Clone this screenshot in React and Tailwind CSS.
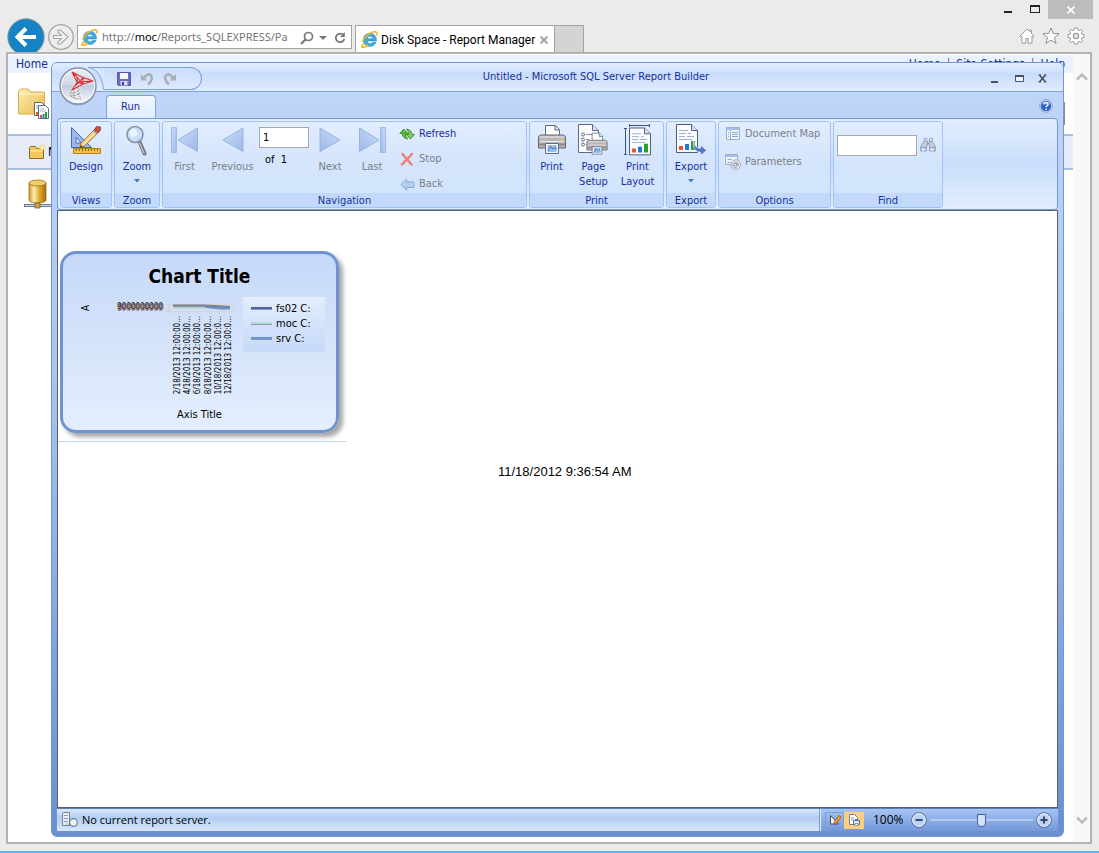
import React from "react";

const TAHOMA = "font-['DejaVu_Sans_Condensed','DejaVu_Sans',sans-serif]";
const SEGOE = "font-['Open_Sans','Noto_Sans',sans-serif]";

/* ---------- browser icons ---------- */

function IeLogo({ className }) {
  return (
    <svg viewBox="0 0 16 16" className={className} aria-hidden="true">
      <path
        d="M14.6 9.3H5.8c.2 1.6 1.3 2.4 2.7 2.4 1.1 0 1.9-.4 2.4-1.2h3.3c-.8 2.5-3 4-5.8 4-3.600 0-6.200-2.400-6.200-6 0-3.700 2.600-6.300 6.200-6.300 3.900 0 6.300 2.800 6.200 7.100zM5.900 7.200h5.100C10.800 5.800 9.900 5 8.500 5 7.100 5 6.200 5.800 5.900 7.200z"
        fill="#3fa9e0"
        stroke="#2a86c4"
        strokeWidth=".5"
      />
      <path
        d="M2.400 12.200C.6 14.200.400 15.500 1.500 15.600c1.200 0 3-1 4.700-2.200M1.800 9.500C3 5.900 7.600 2 11.400.9c2.600-.7 4 .2 3.500 2.600"
        fill="none"
        stroke="#f3b51f"
        strokeWidth="1.500"
        strokeLinecap="round"
      />
    </svg>
  );
}

function BackArrow() {
  return (
    <svg viewBox="0 0 38 38" className="h-[38px] w-[38px]" aria-hidden="true">
      <circle cx="19" cy="19" r="18.200" fill="#1684c4" stroke="#8b9399" strokeWidth="1" />
      <path d="M29 19H11M19 10.500 10.500 19l8.500 8.500" fill="none" stroke="#fff" strokeWidth="4" />
    </svg>
  );
}

function ForwardArrow() {
  return (
    <svg viewBox="0 0 26 26" className="h-[26px] w-[26px]" aria-hidden="true">
      <circle cx="13" cy="13" r="12.300" fill="#ededed" stroke="#a6a6a6" strokeWidth="1.300" />
      <path
        d="M5.500 11.500h8L10 8V6h2.500L20 13l-7.500 7H10v-2l3.500-3.500h-8z"
        fill="#f4f4f4"
        stroke="#a6a6a6"
        strokeWidth="1.100"
      />
    </svg>
  );
}

function HomeIcon() {
  return (
    <svg viewBox="0 0 16 16" className="h-4 w-4" aria-hidden="true">
      <path
        d="M8 1 .8 8.200l1 1L3 8.300v6.900h3.800v-4.700h2.400v4.700H13V8.300l1.200.9 1-1-2.700-2.700V2h-1.700v1.800z"
        fill="#fff"
        stroke="#9a9a9a"
        strokeLinejoin="round"
      />
    </svg>
  );
}

function StarIcon() {
  return (
    <svg viewBox="0 0 18 18" className="h-[18px] w-[18px]" aria-hidden="true">
      <path
        d="m9 1 2.200 5.500 5.900.3-4.600 3.700 1.600 5.900L9 13.200l-5.100 3.200 1.600-5.900L.9 6.800l5.900-.3z"
        fill="#fff"
        stroke="#8f8f8f"
        strokeLinejoin="round"
      />
    </svg>
  );
}

function GearIcon() {
  return (
    <svg viewBox="0 0 18 18" className="h-[18px] w-[18px]" aria-hidden="true">
      <path
        d="M7.500 1h3l.4 2 1.300.6L14 2.500 15.600 4.200l-1.200 1.700.6 1.300 2 .4v2.800l-2 .4-.6 1.300 1.200 1.700-1.600 1.700-1.800-1.100-1.300.6-.4 2h-3l-.4-2-1.300-.6L4 15.500l-1.600-1.700 1.200-1.700L3 10.800l-2-.4V7.600l2-.4.6-1.300L2.400 4.200 4 2.500l1.800 1.100L7.100 3z"
        fill="#fff"
        stroke="#9a9a9a"
        strokeLinejoin="round"
      />
      <circle cx="9" cy="9" r="2.600" fill="#ebebeb" stroke="#9a9a9a" strokeWidth="1.200" />
    </svg>
  );
}

/* ---------- page icons behind the window ---------- */

function MiniChart({ x, y }) {
  return (
    <g transform={`translate(${x} ${y})`}>
      <path d="M.5.5h7l3 3v10H.5z" fill="#fff" stroke="#5c6b85" />
      <path d="M2 4h4M2 6h6" stroke="#a9b6cc" />
      <path d="M2 10h2v3H2z" fill="#f0522a" />
      <path d="M4.500 9h2v4h-2z" fill="#1f7ad8" />
      <path d="M7 7h2v6H7z" fill="#1fa31f" />
    </g>
  );
}

function FolderReports() {
  return (
    <svg viewBox="0 0 32 32" className="h-8 w-8" aria-hidden="true">
      <defs>
        <linearGradient id="folderFill" x1="0" y1="0" x2="1" y2="1">
          <stop offset="0" stopColor="#fdf0b4" />
          <stop offset="1" stopColor="#e7b84b" />
        </linearGradient>
      </defs>
      <path d="M.5 26V3l2-2h8l2 3h14v22z" fill="url(#folderFill)" stroke="#d8ae55" />
      <path d="M1 6h25" stroke="#fff6cf" />
      <MiniChart x={16} y={14} />
      <MiniChart x={20} y={17} />
    </svg>
  );
}

function NewFolder() {
  return (
    <svg viewBox="0 0 18 16" className="h-4 w-[18px] flex-none" aria-hidden="true">
      <path d="M.5 14.500V3.500l1-1h5l1.500 2h6.500v10z" fill="#efc75c" stroke="#8a6d1f" />
      <path d="M1 7h13" stroke="#fff2bd" />
      <path d="M13 0v8M9 4h8M10.200 1.200l5.600 5.600M15.800 1.200l-5.600 5.600" stroke="#ffd83b" />
      <circle cx="13" cy="4" r="1.400" fill="#fff" />
    </svg>
  );
}

function DataSource() {
  return (
    <svg viewBox="0 0 28 30" className="h-[30px] w-7" aria-hidden="true">
      <defs>
        <linearGradient id="drum" x1="0" x2="1">
          <stop offset="0" stopColor="#d79a20" />
          <stop offset=".3" stopColor="#fdeeb0" />
          <stop offset=".6" stopColor="#e3a92f" />
          <stop offset="1" stopColor="#a86f08" />
        </linearGradient>
      </defs>
      <path d="M5 4v17c0 2 4 3 8.500 3s8.500-1 8.500-3V4z" fill="url(#drum)" stroke="#8a6414" strokeWidth=".7" />
      <ellipse cx="13.500" cy="4" rx="8.500" ry="3" fill="#f2cd6a" stroke="#8a6414" strokeWidth=".7" />
      <path d="M0 26.500h28" stroke="#5f7898" strokeWidth="3" />
      <path d="M1 26.500h27" stroke="#d5e0ee" />
      <path d="M11 24h5v5h-5z" fill="#dba337" stroke="#5f5432" strokeWidth=".7" />
    </svg>
  );
}

/* ---------- report builder icons ---------- */

function Orb() {
  return (
    <svg viewBox="0 0 40 40" className="h-10 w-10" aria-hidden="true">
      <defs>
        <linearGradient id="orbFill" x1="0" y1="0" x2="0" y2="1">
          <stop offset="0" stopColor="#eceff5" />
          <stop offset=".45" stopColor="#d3dae8" />
          <stop offset=".5" stopColor="#c2ccdf" />
          <stop offset="1" stopColor="#fbfcff" />
        </linearGradient>
      </defs>
      <circle cx="20" cy="21.500" r="18" fill="#6f84b0" opacity=".5" />
      <circle cx="20" cy="20" r="18" fill="url(#orbFill)" stroke="#8592ad" strokeWidth="1.400" />
      <circle cx="20" cy="20" r="16.600" fill="none" stroke="#fff" opacity=".8" />
      <path d="m15 6-3 5 2 2 3-5z" fill="#e9eaee" stroke="#c9ccd3" strokeWidth=".6" />
      <path d="M16 20c-4 4-6 8-4 10 3 3 8 4 11 3 2-2 1-5 0-8l-1-5z" fill="#e9e9ec" />
      <path
        d="M16 21c-3 4-5 7-3.500 9M13 27c3 1 6-1 9-4M12.500 30c4 0 8-1 10.500-4M17 22c-2 4-2 8 0 11M20 21c0 4 0 8 3 11M13 30c3 3 7 3 10 3"
        fill="none"
        stroke="#8f9196"
        strokeWidth=".9"
        strokeDasharray="2 1"
      />
      <path d="m14 6 10 5 11 4-10 3-11 6 5-8z" fill="#f5dcdf" />
      <path
        d="m14 6 5 5 .500 5-5.500 8 11-6 10-3-11-4zM14 6l5 10 6 2M19 11l6 7 0-7M19 16l16-1M17 20l8-8"
        fill="none"
        stroke="#dc3038"
        strokeWidth="1.100"
        strokeLinejoin="round"
      />
    </svg>
  );
}

function SaveIcon() {
  return (
    <svg viewBox="0 0 14 14" className="h-3.5 w-3.5" aria-hidden="true">
      <path d="M.5.5h13v13h-12l-1-1z" fill="#6c6cc4" stroke="#5a559f" />
      <path d="M3 1h8v6H3z" fill="#f3f5fc" />
      <path d="M3.500 9h7v4.500h-7z" fill="#d6d9ea" />
      <path d="M5 10h2v3H5z" fill="#3d3a78" />
    </svg>
  );
}

function UndoIcon({ flip }) {
  return (
    <svg viewBox="0 0 14 14" className={flip ? "h-3.5 w-3.5 -scale-x-100" : "h-3.5 w-3.5"} aria-hidden="true">
      <path d="M1 2v6.500h6.500z" fill="#a9afba" />
      <path d="M4 6.500C5.500 3 8.500 1.500 10.500 3c2.500 2 1.500 6-2.500 9.500" fill="none" stroke="#a9afba" strokeWidth="2.600" />
    </svg>
  );
}

function DesignIcon() {
  return (
    <svg viewBox="0 0 32 32" className="h-8 w-8" aria-hidden="true">
      <path d="M1.500 3.500v20h20z" fill="#9db7ec" stroke="#4a66b5" />
      <path d="M6 13.500V19h5.500z" fill="#e6effd" stroke="#4a66b5" />
      <path d="M3.500 24.500h27v5h-27z" fill="#f2c14a" stroke="#b27d1a" />
      <path d="M6.500 25v2M9.500 25v2M12.500 25v2M15.500 25v2M18.500 25v2M21.500 25v2M24.500 25v2M27.500 25v2" stroke="#8a5f10" />
      <path d="M11 19.500 26 4l3.500 3.200L14.500 22 10 23.500z" fill="#f8d98a" stroke="#a86f21" />
      <path d="m13 21 15-15.200" stroke="#fff4cf" strokeWidth="1" />
      <path d="m24 6 2.500-3.500 4 .5v3L28 9z" fill="#c8524b" stroke="#8d3c3c" strokeWidth=".8" />
      <path d="m23.200 6.500 4 3.500" stroke="#8f9db0" strokeWidth="1.600" />
      <path d="m10 23.500.8-2.500 1.700 1.700z" fill="#333" />
    </svg>
  );
}

function ZoomIcon() {
  return (
    <svg viewBox="0 0 32 32" className="h-8 w-8" aria-hidden="true">
      <path d="m18.500 18 5 11.500" stroke="#70757d" strokeWidth="4" strokeLinecap="round" />
      <path d="m18.500 19 4.500 10" stroke="#c3c8d0" strokeWidth="1.400" strokeLinecap="round" />
      <circle cx="14" cy="10.500" r="8" fill="#c9e0fb" stroke="#8793a6" strokeWidth="1.600" />
      <path d="M8 10a6 6 0 0 1 6-5.500l3 6-5 3z" fill="#f4f9ff" opacity=".8" />
    </svg>
  );
}

function NavArrow({ back, bar }) {
  return (
    <svg viewBox="0 0 32 32" className={back ? "h-8 w-8" : "h-8 w-8 -scale-x-100"} aria-hidden="true">
      <defs>
        <linearGradient id="navFill" x1="0" y1="0" x2="1" y2="1">
          <stop offset="0" stopColor="#cbdcf7" />
          <stop offset="1" stopColor="#9db9e8" />
        </linearGradient>
      </defs>
      {bar && <path d="M2.500 3.500h5v25h-5z" fill="url(#navFill)" stroke="#a0bae6" />}
      <path
        d={bar ? "M28.500 4v23.500L9 16z" : "M26 4v23.500L6 16z"}
        fill="url(#navFill)"
        stroke="#98b3e2"
        strokeLinejoin="round"
      />
    </svg>
  );
}

function RefreshIcon() {
  return (
    <svg viewBox="0 0 16 16" className="h-4 w-4" aria-hidden="true">
      <path
        d="M.8 7.500 4.800 3l4 4.500H6.500c0 2 .7 3.500 2 5.500C5.200 12.300 3.300 10.500 3.200 7.500z"
        fill="#57bb3e"
        stroke="#2c8222"
        strokeWidth=".8"
      />
      <path
        d="M15.400 8.500l-4 4.500-4-4.500h2.300c0-2-.7-3.500-2-5.500 3.300.7 5.200 2.500 5.300 5.500z"
        fill="#7dd05f"
        stroke="#2c8222"
        strokeWidth=".8"
      />
    </svg>
  );
}

function StopIcon() {
  return (
    <svg viewBox="0 0 16 16" className="h-4 w-4" aria-hidden="true">
      <path d="m3.500 3 9 10.500M13 3 3 13.500" stroke="#ec7f72" strokeWidth="2.500" strokeLinecap="round" />
    </svg>
  );
}

function BackIcon() {
  return (
    <svg viewBox="0 0 16 16" className="h-4 w-4" aria-hidden="true">
      <path d="M2 8.500 7.500 3v3H15v5.500H7.500v3z" fill="#b3cdf3" stroke="#8fa9d4" />
    </svg>
  );
}

function PrinterShape() {
  return (
    <g>
      <path d="M9.500 12V1.500h10l4 4V12z" fill="#fff" stroke="#5c6b85" />
      <path d="M19 2v4h4" fill="#dbe6f6" stroke="#5c6b85" />
      <path d="M2.500 14c0-2 1-3 3-3h21c2 0 3 1 3 3v10h-27z" fill="#b9b8b8" stroke="#66666a" />
      <path d="M4 13h24M4 17.500h24" stroke="#eceae8" />
      <path d="M3 20.500h26" stroke="#8b8a8c" strokeWidth="2" />
      <circle cx="26" cy="15.500" r="1" fill="#e9c93e" />
      <path d="M9.500 19.500h13v10h-13z" fill="#f7fbff" stroke="#5c6b85" />
      <path d="M11.500 21h9v7h-9z" fill="#8fc3ee" />
      <path d="m12 27 3-4 2 2 2-2 1.500 3" fill="none" stroke="#3c79c4" />
      <circle cx="14" cy="23" r="1" fill="#f06a4a" />
    </g>
  );
}

function PrintIcon() {
  return (
    <svg viewBox="0 0 32 32" className="h-8 w-8" aria-hidden="true">
      <PrinterShape />
    </svg>
  );
}

function PageSetupIcon() {
  return (
    <svg viewBox="0 0 32 32" className="h-8 w-8" aria-hidden="true">
      <path d="M.5 28.500v-28h14l6 6v22z" fill="#fafcff" stroke="#5c6b85" />
      <path d="M14.500.5v6h6" fill="#d7e3f5" stroke="#5c6b85" />
      <g fill="#fff" stroke="#5c6b85">
        <circle cx="5" cy="10.500" r="1.500" />
        <circle cx="5" cy="15.500" r="1.500" />
        <circle cx="5" cy="20.500" r="1.500" />
      </g>
      <path d="M8 10.500h8M8 15.500h3M8 20.500h2" stroke="#7f93b5" />
      <g transform="translate(7 8) scale(.75)">
        <PrinterShape />
      </g>
    </svg>
  );
}

function ReportSheet() {
  return (
    <g>
      <path d="M.5.5h15l6 6v22H.5z" fill="#fafcff" stroke="#4f5d75" />
      <path d="M15.500.5v6h6" fill="#d7e3f5" stroke="#4f5d75" />
      <path d="M3 6.500h9M3 9.500h7M12 9.500h3M3 12.500h6M11 12.500h7M3 15.500h13" stroke="#9db0cf" />
      <path d="M3 22h4v4H3z" fill="#f0522a" />
      <path d="M9 20h4v6H9z" fill="#1f7ad8" />
      <path d="M15 17h4v9h-4z" fill="#27a327" />
    </g>
  );
}

function PrintLayoutIcon() {
  return (
    <svg viewBox="0 0 32 32" className="h-8 w-8" aria-hidden="true">
      <path d="M7 1.500h21M7.500 0v3M27.500 0v3M3.500 4v27M2 4.500h3M2 30.500h3" stroke="#33528f" />
      <g transform="translate(7 3.500) scale(1 .96)">
        <ReportSheet />
      </g>
    </svg>
  );
}

function ExportIcon() {
  return (
    <svg viewBox="0 0 32 32" className="h-8 w-8" aria-hidden="true">
      <g transform="translate(1 0)">
        <ReportSheet />
      </g>
      <path
        d="M18.500 17c1 5 3 7 7 7.200V21l6.200 5.500-6.200 5v-3.200c-5-.3-8-4-7-11.300z"
        fill="#5377c9"
        stroke="#eaf2ff"
        strokeWidth=".7"
      />
    </svg>
  );
}

function DocMapIcon() {
  return (
    <svg viewBox="0 0 16 16" className="h-4 w-4" aria-hidden="true">
      <path d="M1.500 1.500h13v12h-13z" fill="#eef4fd" stroke="#9fb0cb" />
      <path d="M2 2h12v2H2z" fill="#a7bfe8" />
      <path d="M5.500 4v9" stroke="#9fb0cb" />
      <path d="M3 6.500h1M3 8.500h1M3 10.500h1M7 6.500h6M7 8.500h6M7 10.500h6" stroke="#8fa5ca" />
    </svg>
  );
}

function ParametersIcon() {
  return (
    <svg viewBox="0 0 16 16" className="h-4 w-4" aria-hidden="true">
      <path d="M.5.5h12v10H.5z" fill="#eef4fd" stroke="#9fb0cb" />
      <path d="M1 1h11v2H1z" fill="#a7bfe8" />
      <path d="M2.500 5.500h4M2.500 8.500h3" stroke="#8fa5ca" />
      <circle cx="10.800" cy="10.600" r="4.800" fill="#f3f5f9" stroke="#a0a8b5" />
      <circle cx="10.500" cy="10.700" r="1.500" fill="none" stroke="#858d9b" />
      <path d="M12.200 9v2.500c.3 1 1.500.8 1.500-.7a3 3 0 1 0-1.500 2.600" fill="none" stroke="#858d9b" strokeWidth=".8" />
    </svg>
  );
}

function BinocularsIcon() {
  return (
    <svg viewBox="0 0 16 16" className="h-4 w-4" aria-hidden="true">
      <path d="M4 1.500h3v3H4zM9.500 1.500h3v3h-3z" fill="#d3dcea" stroke="#a3b1c8" />
      <path d="M3.500 4.500h4v4h-1v5.500h-6V10zM9 4.500h3.500L15.500 10v4h-6V8.500H9z" fill="#c2cee0" stroke="#94a4bf" />
      <path d="M7 6.500h2.500M1 10.500h5M10 10.500h5" stroke="#8b9cb9" />
      <path d="M2 11.500h2v2H2zM11 11.500h2v2h-2z" fill="#f4f7fc" />
    </svg>
  );
}

function HelpIcon() {
  return (
    <svg viewBox="0 0 14 14" className="h-3.5 w-3.5" aria-hidden="true">
      <circle cx="7" cy="7" r="6.300" fill="#dfe8f8" stroke="#8a9cc0" />
      <circle cx="7" cy="7" r="5.200" fill="#2b62cf" />
      <path d="M2.500 5.500a4.700 4.700 0 0 1 9 0z" fill="#7ea6ee" opacity=".7" />
      <path d="M5 5.300c.1-2.200 4-2.200 4 0C9 6.800 7.100 6.500 7.100 8.300" fill="none" stroke="#fff" strokeWidth="1.400" />
      <circle cx="7.100" cy="10.300" r=".9" fill="#fff" />
    </svg>
  );
}

function ServerIcon() {
  return (
    <svg viewBox="0 0 16 16" className="h-4 w-4" aria-hidden="true">
      <path d="M.5 1.500 2 .5h5.500v13h-7z" fill="#e6edf7" stroke="#76849b" />
      <path d="M2 3.500h4M2 6.500h4M2 9.500h4" stroke="#8a9ab5" />
      <path d="M4.500 11.500h2v1h-2z" fill="#57b947" />
      <path d="M8 13.500h7" stroke="#76849b" />
      <circle cx="11.500" cy="10.500" r="3.800" fill="#f2f4f8" stroke="#6f7a8d" strokeWidth="1.200" />
    </svg>
  );
}

function RulerPencilIcon() {
  return (
    <svg viewBox="0 0 14 14" className="h-3.5 w-3.5" aria-hidden="true">
      <path d="M2.500 2.500v8.500h8z" fill="#f5f9ff" stroke="#44506a" />
      <path d="m6.500 8.500 4.500-6 2 1.500-4.500 6-2.500 1z" fill="#f5a623" stroke="#a3481c" strokeWidth=".8" />
    </svg>
  );
}

function ReportRunIcon() {
  return (
    <svg viewBox="0 0 14 14" className="h-3.5 w-3.5" aria-hidden="true">
      <path d="M2.500 1.500h5l3 3v7h-8z" fill="#fff" stroke="#6f83a8" />
      <path d="M4 5h3M4 7h2" stroke="#7c91b7" />
      <path d="M6.500 7.500h6v4h-6z" fill="#dfe6f1" stroke="#5f6f8d" />
      <path d="M8 6h3v2H8z" fill="#3f78c9" />
      <path d="M8 10.500h3v2H8z" fill="#fff" stroke="#5f6f8d" strokeWidth=".6" />
    </svg>
  );
}

function RoundSign({ plus }) {
  return (
    <svg viewBox="0 0 16 16" className="h-4 w-4" aria-hidden="true">
      <circle cx="8" cy="8" r="7.300" fill="#bcd2f4" stroke="#4d6592" />
      <circle cx="8" cy="8" r="6.300" fill="none" stroke="#eef5ff" />
      <path d={plus ? "M4.500 8h7M8 4.500v7" : "M4.500 8h7"} stroke="#37496b" strokeWidth="2" />
    </svg>
  );
}

/* ---------- ribbon parts ---------- */

function Group({ title, className, bodyClass, children }) {
  return (
    <section
      aria-label={title}
      className={`flex flex-none flex-col overflow-hidden rounded-[3px] border border-[#9fc2f8] bg-linear-to-b from-[#e2edff] via-[#d3e4fc] to-[#d3e5fe] ${className}`}
    >
      <div className={`flex flex-1 items-start pt-[2px] ${bodyClass || ""}`}>{children}</div>
      <h3 className="h-[14px] flex-none bg-[#c3d9fb] text-center leading-[15px] text-[#15309c]">{title}</h3>
    </section>
  );
}

function BigButton({ icon, label, disabled, menu, className }) {
  return (
    <button
      type="button"
      disabled={disabled}
      className={`flex flex-none flex-col items-center gap-[3px] leading-[15px] ${disabled ? "text-[#7c7f86]" : "text-[#15309c]"} ${className || ""}`}
    >
      {icon}
      <span className="flex flex-col items-center">
        {label}
        {menu && (
          <svg viewBox="0 0 6 4" className="mt-[5px] h-1 w-1.5" aria-hidden="true">
            <path d="M0 0h6L3 3.500z" fill="#4a7ab8" />
          </svg>
        )}
      </span>
    </button>
  );
}

function SmallButton({ icon, label, disabled }) {
  return (
    <button
      type="button"
      disabled={disabled}
      className={`flex items-center gap-1 leading-4 ${disabled ? "text-[#7c7f86]" : "text-[#15309c]"}`}
    >
      {icon}
      {label}
    </button>
  );
}

function Ribbon() {
  return (
    <div className="flex h-[92px] flex-none gap-[2px] rounded-[4px] border border-[#6f9ade] bg-linear-to-b from-[#e3eefe] via-[#c9defb] to-[#e2eefe] px-[2px] pt-[2px] pb-px text-[11px]">
      <Group title="Views" className="w-[52px]" bodyClass="justify-center">
        <BigButton icon={<DesignIcon />} label="Design" />
      </Group>
      <Group title="Zoom" className="w-[46px]" bodyClass="justify-center">
        <BigButton icon={<ZoomIcon />} label="Zoom" menu />
      </Group>
      <Group title="Navigation" className="w-[365px]">
        <BigButton icon={<NavArrow back bar />} label="First" disabled className="w-[43px]" />
        <BigButton icon={<NavArrow back />} label="Previous" disabled className="w-[53px]" />
        <div className="flex w-[50px] flex-col gap-1">
          <input
            aria-label="Page number"
            defaultValue="1"
            className="mt-[3px] h-[21px] w-[50px] border border-[#a6a9ae] bg-white px-[3px] text-black"
          />
          <span className="pl-[6px] leading-[15px] text-black">of&nbsp; 1</span>
        </div>
        <BigButton icon={<NavArrow />} label="Next" disabled className="w-[42px]" />
        <BigButton icon={<NavArrow bar />} label="Last" disabled className="w-[42px]" />
        <div className="mt-[2px] ml-[6px] flex flex-col gap-[9px]">
          <SmallButton icon={<RefreshIcon />} label="Refresh" />
          <SmallButton icon={<StopIcon />} label="Stop" disabled />
          <SmallButton icon={<BackIcon />} label="Back" disabled />
        </div>
      </Group>
      <Group title="Print" className="w-[135px]" bodyClass="px-px">
        <BigButton icon={<PrintIcon />} label="Print" className="w-[41px]" />
        <BigButton
          icon={<PageSetupIcon />}
          label={
            <>
              <span>Page</span>
              <span>Setup</span>
            </>
          }
          className="w-[43px]"
        />
        <BigButton
          icon={<PrintLayoutIcon />}
          label={
            <>
              <span>Print</span>
              <span>Layout</span>
            </>
          }
          className="w-[45px]"
        />
      </Group>
      <Group title="Export" className="w-[50px]" bodyClass="justify-center">
        <BigButton icon={<ExportIcon />} label="Export" menu />
      </Group>
      <Group title="Options" className="w-[113px]" bodyClass="pl-[6px]">
        <div className="mt-[2px] flex flex-col gap-3">
          <SmallButton icon={<DocMapIcon />} label="Document Map" disabled />
          <SmallButton icon={<ParametersIcon />} label="Parameters" disabled />
        </div>
      </Group>
      <Group title="Find" className="w-[110px]" bodyClass="gap-[3px] pl-[3px]">
        <input aria-label="Find text" className="mt-[11px] h-[21px] w-20 border border-[#a6a9ae] bg-white px-1" />
        <button type="button" disabled aria-label="Find" className="mt-[13px]">
          <BinocularsIcon />
        </button>
      </Group>
    </div>
  );
}

/* ---------- report ---------- */

const TICKS = [
  "2/18/2013 12:00:00...",
  "4/18/2013 12:00:00...",
  "6/18/2013 12:00:00...",
  "8/18/2013 12:00:00...",
  "10/18/2013 12:00:0...",
  "12/18/2013 12:00:0...",
];

const SERIES = [
  { name: "fs02 C:", color: "bg-[#4a68a8]" },
  { name: "moc C:", color: "bg-[#b4dcd8]" },
  { name: "srv C:", color: "bg-[#6f93cf]" },
];

function Plot() {
  return (
    <svg viewBox="0 0 176 100" className="h-[100px] w-[176px] flex-none" aria-label="Disk space by date">
      <text className="text-[10px]" transform="translate(26 14) rotate(-90)">
        A
      </text>
      <g className="text-[8px]" fill="#1a1a1a">
        <text x="54" y="12">9000000000</text>
        <text x="55" y="13" opacity=".7">8000000000</text>
        <text x="54" y="14" fill="#8c3b2c" opacity=".7">0000000000</text>
      </g>
      <path d="M102 7.500h70M102 11.500h70M102 14.500h70" stroke="#d5d5d5" />
      <path d="M105.500 7v10M115.500 14v3M125.500 14v3M135.500 14v3M146.500 14v3M156.500 14v3M166.500 14v3" stroke="#cfd0d2" />
      <path d="M110 9.500h30l15 1h12" fill="none" stroke="#a8c4c2" strokeWidth="2.500" />
      <path d="M110 8.500h32l25 1.500" fill="none" stroke="#747f8c" strokeWidth="1.800" />
      <path d="M142 9.500l14 2h11" fill="none" stroke="#6c8cc2" strokeWidth="2" />
      <g className="text-[8px]" fill="#000">
        {TICKS.map((t, i) => (
          <text key={t} textAnchor="end" transform={`translate(${117 + i * 10.2} 19) rotate(-90)`}>
            {t}
          </text>
        ))}
      </g>
    </svg>
  );
}

function ChartCard() {
  return (
    <figure className="w-[288px] border-b border-[#c5d5ea] pb-2 pl-[2px]">
      <div className="flex h-[182px] w-[279px] flex-col rounded-[16px] border-3 border-[#6f93cf] bg-linear-to-b from-[#c6d9f8] to-[#e4eefd] shadow-[4px_4px_4px_rgba(0,0,0,0.35)]">
        <h2 className="pt-[10px] text-center text-[19px] leading-6 font-bold text-black">Chart Title</h2>
        <div className="flex items-start pt-[9px]">
          <Plot />
          <ul className="ml-1 flex w-[82px] flex-col bg-linear-to-b from-[#e2edfd] to-[#c6d9f8] pt-1 pb-[6px] pl-2 text-[11px]">
            {SERIES.map((s) => (
              <li key={s.name} className="flex items-center gap-1 leading-[15px]">
                <span className={`h-[3px] w-[21px] border-b border-[#8d97a8] ${s.color}`} />
                {s.name}
              </li>
            ))}
          </ul>
        </div>
        <figcaption className="pt-[10px] text-center text-[11px] leading-4 text-black">Axis Title</figcaption>
      </div>
    </figure>
  );
}

/* ---------- report builder window ---------- */

function TitleBar() {
  return (
    <div className="relative flex h-[29px] flex-none items-start border-b border-[#7ba2e2] bg-linear-to-b from-[#e4effe] via-[#c9dcfa] via-40% to-[#e0ecff]">
      <div className="ml-9 flex h-full pt-1">
        <svg viewBox="0 0 16 23" className="h-[23px] w-4" aria-hidden="true">
          <path d="M0 .5C9 2 14 10 15.500 22.500H16V.5z" fill="#d6e6fd" />
          <path d="M0 .5h16M2 .8C10 3 14 10 15.500 22.500" fill="none" stroke="#7ba2e2" />
        </svg>
        <div className="flex h-[23px] w-[98px] items-start gap-[9px] rounded-r-full border-y border-r border-[#7ba2e2] bg-linear-to-b from-[#cbddf9] to-[#dce9fe] pt-1 pl-[13px]">
          <button type="button" aria-label="Save">
            <SaveIcon />
          </button>
          <button type="button" aria-label="Undo" disabled>
            <UndoIcon />
          </button>
          <button type="button" aria-label="Redo" disabled>
            <UndoIcon flip />
          </button>
        </div>
      </div>
      <h1 className="flex-1 pt-[6px] text-center text-[11px] leading-4 text-[#15309c]">
        Untitled - Microsoft SQL Server Report Builder
      </h1>
      <div className="flex gap-[14px] pt-[11px] pr-[15px] text-[#4b5560]">
        <button type="button" aria-label="Minimize window">
          <svg viewBox="0 0 10 10" className="h-2.5 w-2.5">
            <path d="M1 8h7" stroke="currentColor" strokeWidth="2" />
          </svg>
        </button>
        <button type="button" aria-label="Maximize window">
          <svg viewBox="0 0 10 10" className="h-2.5 w-2.5">
            <path d="M1.500 1.500h8v6h-8z" fill="#eef5ff" stroke="currentColor" />
            <path d="M1 2h9" stroke="currentColor" strokeWidth="2" />
          </svg>
        </button>
        <button type="button" aria-label="Close window">
          <svg viewBox="0 0 10 10" className="h-2.5 w-2.5">
            <path d="m1.500 1 6 7M7.500 1l-6 7" stroke="currentColor" strokeWidth="1.700" />
            <path d="M.5 1H3M6 1h2.500M.5 8H3M6 8h2.500" stroke="currentColor" />
          </svg>
        </button>
      </div>
      <button type="button" aria-label="Report Builder menu" className="absolute top-[3px] left-[6px]">
        <Orb />
      </button>
    </div>
  );
}

function StatusBar() {
  return (
    <footer className={`flex h-[23px] flex-none items-stretch border-t border-[#5c7fb8] text-black ${SEGOE}`}>
      <div className="flex flex-1 items-center gap-1 border-r border-[#7b9bd0] bg-linear-to-b from-[#d9e7fb] via-[#b2cdf3] via-40% to-[#d8e6fb] pl-[5px]">
        <ServerIcon />
        <span className="text-[11px]">No current report server.</span>
      </div>
      <div className="flex w-[238px] items-center border-l border-[#e2edff] bg-linear-to-b from-[#a7c5f2] to-[#7397d8] pl-1">
        <button
          type="button"
          aria-label="Design view"
          className="flex h-[17px] w-[19px] items-center justify-center border border-[#7d9fd8]"
        >
          <RulerPencilIcon />
        </button>
        <button type="button" aria-label="Run view" className="flex h-[17px] w-5 items-center justify-center bg-[#ffcf7d]">
          <ReportRunIcon />
        </button>
        <output className="ml-[9px] w-9 text-[12px]">100%</output>
        <button type="button" aria-label="Zoom out" className="ml-[2px]">
          <RoundSign />
        </button>
        <input
          type="range"
          aria-label="Zoom level"
          defaultValue="50"
          className="mx-[3px] h-4 w-[103px] appearance-none bg-linear-to-b from-transparent from-44% via-[#e3edfd] via-50% to-transparent to-56% [&::-webkit-slider-thumb]:h-[13px] [&::-webkit-slider-thumb]:w-[9px] [&::-webkit-slider-thumb]:appearance-none [&::-webkit-slider-thumb]:rounded-b-[4px] [&::-webkit-slider-thumb]:border [&::-webkit-slider-thumb]:border-[#3f5f9c] [&::-webkit-slider-thumb]:bg-[#d3e2f9]"
        />
        <button type="button" aria-label="Zoom in">
          <RoundSign plus />
        </button>
      </div>
    </footer>
  );
}

function ReportBuilder() {
  return (
    <section
      aria-label="Report Builder"
      className={`absolute top-2 right-[26px] bottom-[5px] left-[43px] flex flex-col overflow-hidden rounded-[6px] border border-[#6f97da] bg-linear-to-b from-[#bfd5f7] from-5% via-[#a9c4ee] via-40% to-[#6b8fcf] ${TAHOMA}`}
    >
      <TitleBar />
      <div className="flex h-[26px] flex-none items-start justify-between pr-[10px] pl-[54px]">
        <button
          type="button"
          role="tab"
          aria-selected="true"
          className="mt-[3px] h-6 w-[50px] rounded-t-[4px] border border-b-0 border-[#7ba2e2] bg-linear-to-b from-[#f2f7ff] to-[#e0ecff] pr-px text-[11px] text-[#15309c]"
        >
          Run
        </button>
        <button type="button" aria-label="Help" className="mt-[7px]">
          <HelpIcon />
        </button>
      </div>
      <div className="flex flex-1 flex-col px-[5px] pb-[5px]">
        <Ribbon />
        <main className="flex-1 border border-[#56606e] bg-white pt-10">
          <ChartCard />
          <p className="pt-[22px] pl-[440px] font-['Liberation_Sans',Arial,sans-serif] text-[13px] leading-4 text-black">
            11/18/2012 9:36:54 AM
          </p>
        </main>
        <StatusBar />
      </div>
    </section>
  );
}

/* ---------- browser ---------- */

function BrowserBar() {
  return (
    <header className="flex h-[52px] flex-none items-end pl-[7px] font-['Roboto','Noto_Sans',sans-serif] text-[12px]">
      <button type="button" aria-label="Back" className="h-[34px] overflow-hidden">
        <BackArrow />
      </button>
      <button type="button" aria-label="Forward" className="mb-[2px] ml-[3px]">
        <ForwardArrow />
      </button>
      <div className="mb-[3px] ml-[3px] flex h-6 w-[275px] items-center border border-[#a3a3a3] bg-white pt-px pr-1 pl-[3px]">
        <IeLogo className="h-[17px] w-[17px] flex-none" />
        <a href="#address" className="ml-1 flex-1 font-['Noto_Sans',sans-serif] text-[11px] whitespace-nowrap text-[#767676]">
          http://<span className="text-black">moc</span>/Reports_SQLEXPRESS/Pa
        </a>
        <button type="button" aria-label="Search">
          <svg viewBox="0 0 14 14" className="h-3.5 w-3.5">
            <circle cx="8.500" cy="5.500" r="4" fill="none" stroke="#777" strokeWidth="1.700" />
            <path d="m5.500 8.500-4.500 4.500" stroke="#777" strokeWidth="2.200" />
          </svg>
        </button>
        <button type="button" aria-label="Show suggestions" className="ml-[5px]">
          <svg viewBox="0 0 8 4" className="h-1 w-2">
            <path d="M0 0h8L4 4z" fill="#777" />
          </svg>
        </button>
        <button type="button" aria-label="Reload" className="ml-[6px]">
          <svg viewBox="0 0 14 14" className="h-3.5 w-3.5">
            <path d="M10.500 4.200A4.300 4.300 0 1 0 11.300 8" fill="none" stroke="#777" strokeWidth="1.800" />
            <path d="M11.800 1v5H7z" fill="#777" />
          </svg>
        </button>
      </div>
      <div className="ml-[3px] flex h-[27px] w-[200px] items-center border border-b-0 border-[#a3a3a3] bg-white pt-px pl-[5px]">
        <IeLogo className="h-[17px] w-[17px] flex-none" />
        <span className="ml-[3px] flex-1 whitespace-nowrap text-black">Disk Space - Report Manager</span>
        <button type="button" aria-label="Close tab" className="mr-[6px]">
          <svg viewBox="0 0 8 8" className="h-2 w-2">
            <path d="m.5.5 7 7M7.500.5l-7 7" stroke="#a5a5a5" strokeWidth="2" />
          </svg>
        </button>
      </div>
      <button
        type="button"
        aria-label="New tab"
        className="h-[27px] w-[29px] border border-b-0 border-l-0 border-[#a3a3a3] bg-[#d4d4d4]"
      />
      <div className="ml-auto flex h-full flex-col items-end gap-2 pr-[6px]">
        <div className="flex items-start">
          <button type="button" aria-label="Minimize" className="mt-[11px] mr-[18px] h-[2px] w-2 bg-[#222]" />
          <button type="button" aria-label="Maximize" className="mt-[5px] mr-2 h-2 w-2.5 border border-t-2 border-[#222]" />
          <button type="button" aria-label="Close" className="flex h-[19px] w-[45px] items-center justify-center bg-[#bcbcbc]">
            <svg viewBox="0 0 8 8" className="h-2 w-2">
              <path d="m.5.5 7 7M7.500.5l-7 7" stroke="#fff" strokeWidth="1.600" />
            </svg>
          </button>
        </div>
        <div className="flex items-center gap-[7px] pr-2">
          <button type="button" aria-label="Home">
            <HomeIcon />
          </button>
          <button type="button" aria-label="Favorites">
            <StarIcon />
          </button>
          <button type="button" aria-label="Tools">
            <GearIcon />
          </button>
        </div>
      </div>
    </header>
  );
}

function Chevron({ down }) {
  return (
    <svg viewBox="0 0 12 9" className={down ? "h-[9px] w-3 rotate-180" : "h-[9px] w-3"} aria-hidden="true">
      <path d="m1 7.500 5-5 5 5" fill="none" stroke="#bcbcbc" strokeWidth="2.600" />
    </svg>
  );
}

export default function App() {
  return (
    <div className="flex min-h-screen flex-col bg-[#ebebeb]">
      <BrowserBar />
      <div className="relative mr-[7px] ml-[6px] flex flex-1 border-2 border-[#b3b3b3] bg-white">
        <div className="flex-1 pt-px">
          <nav className={`flex h-[18px] justify-between bg-[#eaf2ff] px-2 text-[12px] leading-[18px] text-[#15308c] ${TAHOMA}`}>
            <a href="#home">Home</a>
            <span className="flex gap-[6px]">
              <a href="#home">Home</a>
              <span className="text-[#666]">|</span>
              <a href="#settings">Site Settings</a>
              <span className="text-[#666]">|</span>
              <a href="#help">Help</a>
            </span>
          </nav>
          <div className="flex h-[61px] items-center justify-between pr-2 pl-[10px]">
            <FolderReports />
            <input aria-label="Search reports" className="mt-5 h-[23px] w-40 border border-[#8c8c8c] bg-white" />
          </div>
          <div className={`flex h-9 items-center gap-px border-y-2 border-[#a9c0dd] bg-[#e8ecfa] pl-[21px] text-[12px] text-black ${TAHOMA}`}>
            <NewFolder />
            <span>New Folder</span>
          </div>
          <div className="pt-[9px] pl-4">
            <DataSource />
          </div>
        </div>
        <div className="flex w-[17px] flex-col items-center justify-between bg-[#f8f8f8] pt-[18px] pb-[17px]">
          <button type="button" aria-label="Scroll up">
            <Chevron />
          </button>
          <button type="button" aria-label="Scroll down">
            <Chevron down />
          </button>
        </div>
        <ReportBuilder />
      </div>
      <div className="mt-[7px] h-[2px] bg-[#5db8f5]" />
    </div>
  );
}
